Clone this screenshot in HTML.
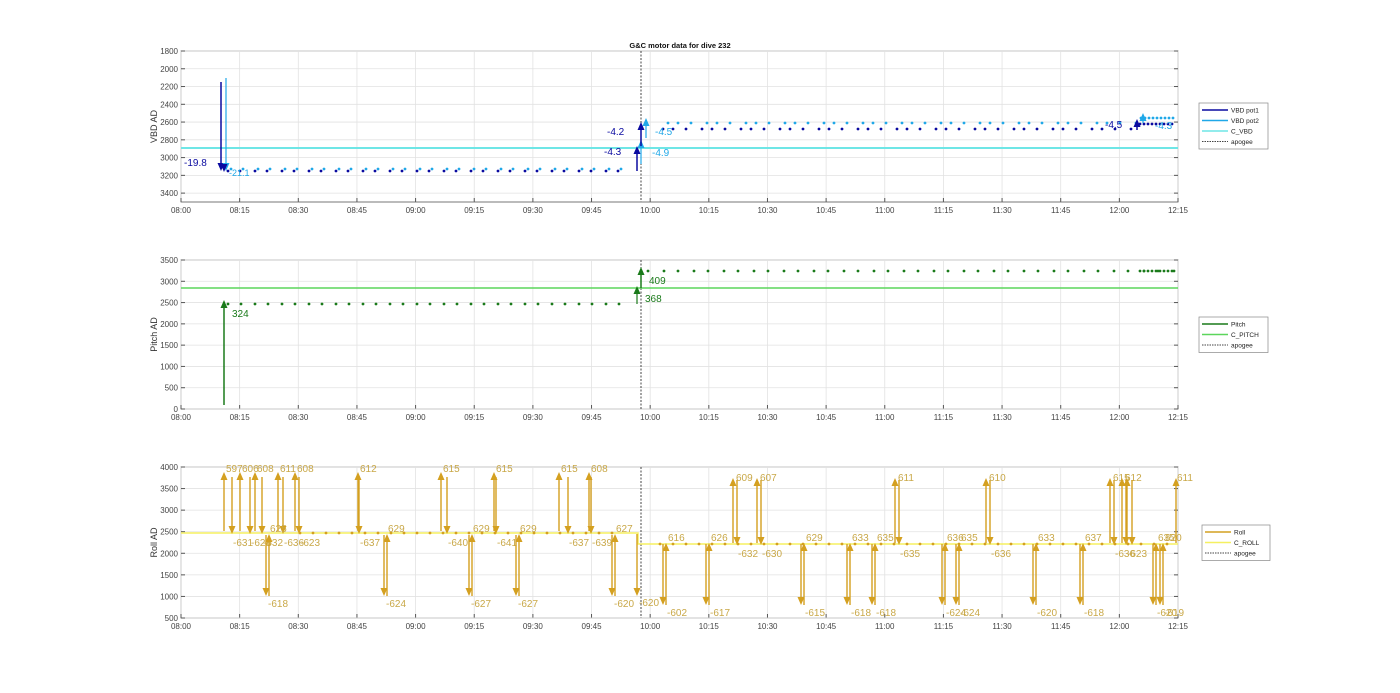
<!DOCTYPE html>
<html><head><meta charset="utf-8"><style>
body{margin:0;background:#fff;}
svg{display:block;font-family:"Liberation Sans",sans-serif;}
</style></head><body>
<svg id="s" width="1400" height="693" xmlns="http://www.w3.org/2000/svg"></svg>
<script>
const S=document.getElementById('s');let h='';
const X0=181,X1=1178;
const xt=['08:00','08:15','08:30','08:45','09:00','09:15','09:30','09:45','10:00','10:15','10:30','10:45','11:00','11:15','11:30','11:45','12:00','12:15'];
function axes(top,bot,ticks,lab){
 h+=`<rect x="${X0}" y="${top}" width="${X1-X0}" height="${bot-top}" fill="#fff" stroke="#555" stroke-width="0.8"/>`;
 for(let i=0;i<18;i++){let x=X0+i*(X1-X0)/17;
  h+=`<line x1="${x}" y1="${top}" x2="${x}" y2="${bot}" stroke="#e2e2e2" stroke-width="0.8"/>`;
  h+=`<line x1="${x}" y1="${bot}" x2="${x}" y2="${bot-4}" stroke="#555"/>`;
  h+=`<text x="${x}" y="${bot+11}" font-size="8" fill="#444" text-anchor="middle">${xt[i]}</text>`;}
 ticks.forEach(t=>{h+=`<line x1="${X0}" y1="${t[1]}" x2="${X1}" y2="${t[1]}" stroke="#e2e2e2" stroke-width="0.8"/>`;
  h+=`<line x1="${X0}" y1="${t[1]}" x2="${X0+4}" y2="${t[1]}" stroke="#555"/><line x1="${X1}" y1="${t[1]}" x2="${X1-4}" y2="${t[1]}" stroke="#555"/>`;
  h+=`<text x="${X0-3}" y="${t[1]+3}" font-size="8" fill="#444" text-anchor="end">${t[0]}</text>`;});
 h+=`<text transform="translate(157,${(top+bot)/2}) rotate(-90)" font-size="9" fill="#333" text-anchor="middle">${lab}</text>`;
 h+=`<line x1="641" y1="${top}" x2="641" y2="${bot}" stroke="#444" stroke-width="1" stroke-dasharray="2,1.5"/>`;
}
function arrow(x,y1,y2,c,w){let d=y2<y1?1:-1;
 h+=`<line x1="${x}" y1="${y1}" x2="${x}" y2="${y2+d*5}" stroke="${c}" stroke-width="${w}"/>`;
 h+=`<polygon points="${x-3.5},${y2+d*8} ${x+3.5},${y2+d*8} ${x},${y2}" fill="${c}"/>`;}
function txt(x,y,t,c,s){h+=`<text x="${x}" y="${y}" font-size="${s||10}" fill="${c}">${t}</text>`;}
function legend(x,y,w,items){h+=`<rect x="${x}" y="${y}" width="${w}" height="${items.length*10.5+4}" fill="#fff" stroke="#888" stroke-width="0.7"/>`;
 items.forEach((it,i)=>{let yy=y+7+i*10.5;h+=`<line x1="${x+3}" y1="${yy}" x2="${x+29}" y2="${yy}" stroke="${it[1]}" stroke-width="${it[2]}" ${it[3]?'stroke-dasharray="1.5,1"':''}/>`;
 txt(x+32,yy+2.5,it[0],'#222',6.5);});}
h+=`<text x="680" y="48" font-size="7.5" font-weight="bold" fill="#111" text-anchor="middle">G&amp;C motor data for dive 232</text>`;
let t1=[];for(let v=1800;v<=3400;v+=200)t1.push([v,51+(v-1800)*151/1700]);
axes(51,202,t1,'VBD AD');
const DB='#0a0aa0',LB='#20a8e8',CV='#6ee6e6';
h+=`<line x1="${X0}" y1="148" x2="${X1}" y2="148" stroke="${CV}" stroke-width="2"/>`;
function dots(xs,y,c){xs.forEach(x=>h+=`<circle cx="${x}" cy="${y}" r="1.4" fill="${c}"/>`);}
let a=[],b=[];for(let x=228;x<625;x+=9+((x*7)%9)){a.push(x);b.push(x+3);}
dots(a,171,DB);dots(b,169,LB);
a=[];b=[];for(let x=663;x<1140;x+=10+((x*3)%9)){a.push(x);b.push(x+5);}
dots(a,129,DB);dots(b,123,LB);
a=[];for(let x=1140;x<1176;x+=4)a.push(x);dots(a,124,DB);dots(a.map(x=>x+1),118,LB);
arrow(221,82,171,DB,1.5);arrow(226,78,171,LB,1.2);arrow(224,165,172,DB,1.5);
txt(184,166,'-19.8',DB);txt(229,176,'-21.1',LB,9);
arrow(637,171,146,DB,1.5);arrow(641,164,140,LB,1.2);arrow(641,146,122,DB,1.5);arrow(646,138,118,LB,1.2);
txt(604,155,'-4.3',DB);txt(607,135,'-4.2',DB);txt(652,156,'-4.9',LB);txt(655,135,'-4.5',LB);
arrow(1137,130,119,DB,1.5);arrow(1143,123,113,LB,1.2);txt(1105,128,'-4.5',DB);txt(1155,129,'-4.3',LB);
legend(1199,103,69,[['VBD pot1',DB,1.5],['VBD pot2',LB,1.5],['C_VBD',CV,1.5],['apogee','#444',1,1]]);
let t2=[];for(let v=0;v<=3500;v+=500)t2.push([v,260+(3500-v)*149/3500]);
axes(260,409,t2,'Pitch AD');
const G='#1a7a1a';
h+=`<line x1="${X0}" y1="288" x2="${X1}" y2="288" stroke="#5cd65c" stroke-width="1.5"/>`;
a=[];for(let x=228;x<625;x+=10+((x*7)%9))a.push(x);dots(a,304,G);
a=[];for(let x=648;x<1176;x+=12+((x*3)%10))a.push(x);dots(a,271,G);
a=[];for(let x=1140;x<1176;x+=4)a.push(x);dots(a,271,G);
arrow(224,405,300,G,1.5);txt(232,317,'324',G);
arrow(637,304,286,G,1.2);txt(645,302,'368',G);arrow(641,288,267,G,1.5);txt(649,284,'409',G);
legend(1199,317,69,[['Pitch',G,1.5],['C_PITCH','#5cd65c',1.5],['apogee','#444',1,1]]);
let t3=[];for(let v=500;v<=4000;v+=500)t3.push([v,467+(4000-v)*151/3500]);
axes(467,618,t3,'Roll AD');
const R='#d4a020',RL='#c9a848';
h+=`<polyline points="${X0},533 638,533 638,544 ${X1},544" fill="none" stroke="#f5f060" stroke-width="1.5"/>`;
a=[];for(let x=300;x<620;x+=13)a.push(x);dots(a,533,R);a=[];for(let x=660;x<1176;x+=13)a.push(x);dots(a,544,R);
const ups=[[224,'597'],[240,'606'],[255,'608'],[278,'611'],[295,'608'],[358,'612'],[441,'615'],[494,'615'],[559,'615'],[589,'608']];
ups.forEach(u=>{arrow(u[0],531,472,R,1.4);txt(u[0]+2,472,u[1],RL);});
const dn=[[232,'-631'],[250,'-628'],[262,'-632'],[283,'-636'],[299,'-623'],[359,'-637'],[447,'-640'],[496,'-641'],[568,'-637'],[591,'-639']];
dn.forEach(u=>{arrow(u[0],477,534,R,1.4);txt(u[0]+1,546,u[1],RL);});
const big=[[267,'-618','625'],[385,'-624','629'],[470,'-627','629'],[517,'-627','629'],[613,'-620','627']];
big.forEach(u=>{arrow(u[0]-1,535,596,R,1.4);arrow(u[0]+2,596,534,R,1.4);txt(u[0]+1,607,u[1],RL);txt(u[0]+3,532,u[2],RL);});
arrow(637,534,596,R,1.4);txt(639,606,'-620',RL);
const post=[[665,'-602','616'],[708,'-617','626'],[803,'-615','629'],[849,'-618','633'],[874,'-618','635'],[944,'-624','636'],[958,'-624','635'],[1035,'-620','633'],[1082,'-618','637'],[1155,'-620','635'],[1162,'-619','620']];
post.forEach(u=>{arrow(u[0]-2,544,605,R,1.4);arrow(u[0]+1,605,543,R,1.4);txt(u[0]+2,616,u[1],RL);txt(u[0]+3,541,u[2],RL);});
const hi=[[733,'609','-632'],[757,'607','-630'],[895,'611','-635'],[986,'610','-636'],[1110,'615','-636'],[1122,'612','-623']];
hi.forEach(u=>{arrow(u[0],543,478,R,1.4);arrow(u[0]+4,480,545,R,1.4);txt(u[0]+3,481,u[1],RL);txt(u[0]+5,557,u[2],RL);});
arrow(1127,543,478,R,1.4);arrow(1132,480,545,R,1.4);arrow(1176,543,478,R,1.4);txt(1177,481,'611',RL);
legend(1202,525,68,[['Roll',R,1.5],['C_ROLL','#f5f060',1.5],['apogee','#444',1,1]]);
S.innerHTML=h;
</script>
</body></html>
